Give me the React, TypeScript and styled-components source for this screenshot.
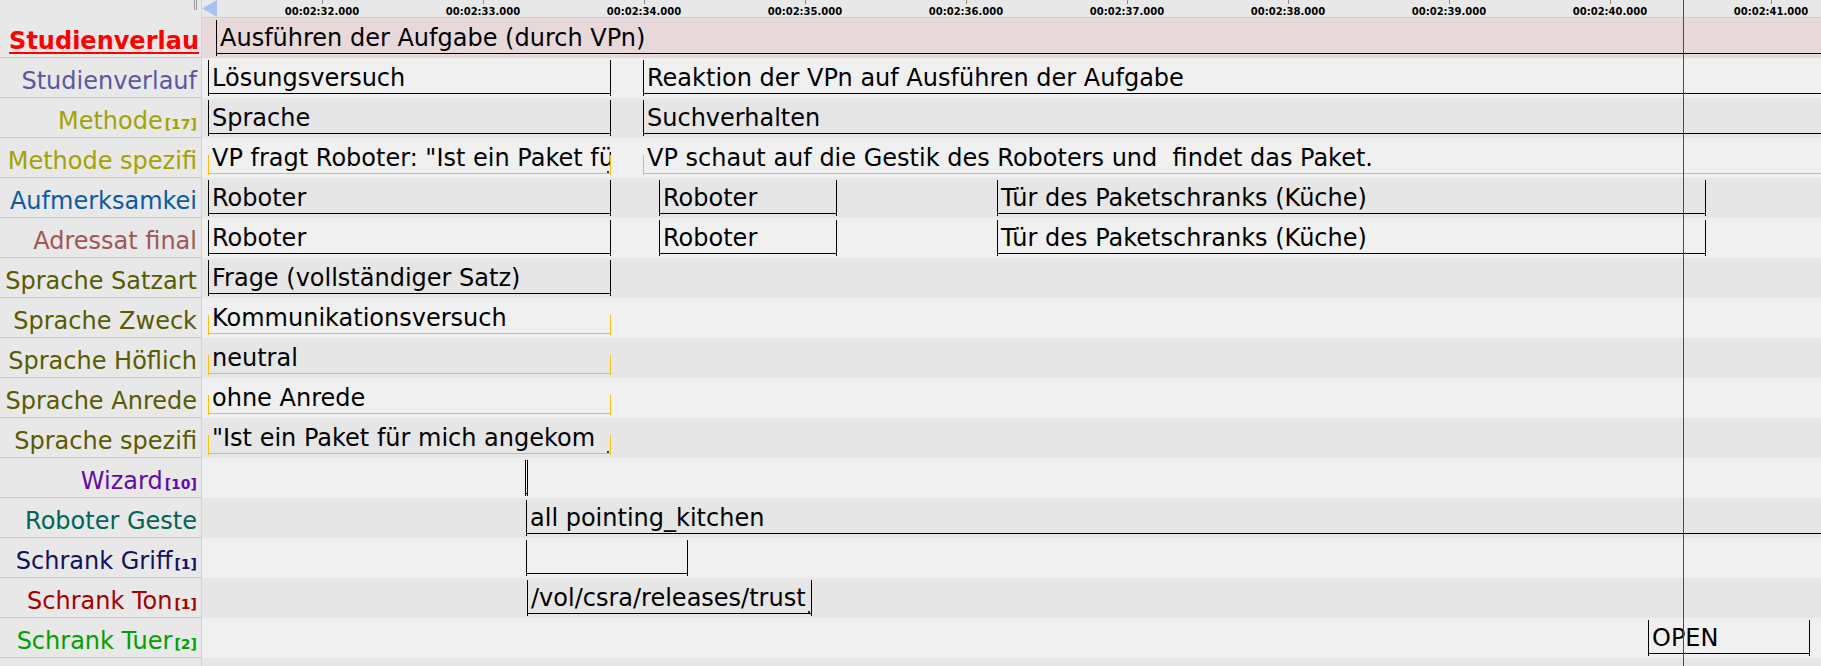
import React from "react";
import styled, { createGlobalStyle } from "styled-components";

type Kind = "solid" | "dep";
type Tone = "active" | "light" | "dark";

type Seg = {
  from: number;
  to?: number;
  text?: string;
  cut?: boolean;
};

type Tier = {
  name: string;
  count?: number;
  color: string;
  kind?: Kind;
  active?: boolean;
  segs: Seg[];
};

const LABEL_W = 202;
const SEC_PX = 161;
const FIRST_TICK = 120; // 00:02:32.000, in track coordinates
const CURSOR_X = 1683;

const ticks = [32, 33, 34, 35, 36, 37, 38, 39, 40, 41];

const roboterRow: Seg[] = [
  { from: 6, to: 409, text: "Roboter" },
  { from: 457, to: 635, text: "Roboter" },
  { from: 795, to: 1504, text: "Tür des Paketschranks (Küche)" },
];

const tiers: Tier[] = [
  {
    name: "Studienverlau",
    color: "#ff0000",
    active: true,
    segs: [{ from: 14, text: "Ausführen der Aufgabe (durch VPn)" }],
  },
  {
    name: "Studienverlauf",
    color: "#5858a2",
    segs: [
      { from: 6, to: 409, text: "Lösungsversuch" },
      { from: 441, text: "Reaktion der VPn auf Ausführen der Aufgabe" },
    ],
  },
  {
    name: "Methode",
    count: 17,
    color: "#a3a300",
    segs: [
      { from: 6, to: 409, text: "Sprache" },
      { from: 441, text: "Suchverhalten" },
    ],
  },
  {
    name: "Methode spezifi",
    color: "#a3a300",
    kind: "dep",
    segs: [
      { from: 6, to: 409, text: 'VP fragt Roboter: "Ist ein Paket fü', cut: true },
      { from: 441, text: "VP schaut auf die Gestik des Roboters und  findet das Paket." },
    ],
  },
  { name: "Aufmerksamkei", color: "#0a5aa5", segs: roboterRow },
  { name: "Adressat final", color: "#a35555", segs: roboterRow },
  {
    name: "Sprache Satzart",
    color: "#5a5a00",
    segs: [{ from: 6, to: 409, text: "Frage (vollständiger Satz)" }],
  },
  {
    name: "Sprache Zweck",
    color: "#5a5a00",
    kind: "dep",
    segs: [{ from: 6, to: 409, text: "Kommunikationsversuch" }],
  },
  {
    name: "Sprache Höflich",
    color: "#5a5a00",
    kind: "dep",
    segs: [{ from: 6, to: 409, text: "neutral" }],
  },
  {
    name: "Sprache Anrede",
    color: "#5a5a00",
    kind: "dep",
    segs: [{ from: 6, to: 409, text: "ohne Anrede" }],
  },
  {
    name: "Sprache spezifi",
    color: "#5a5a00",
    kind: "dep",
    segs: [{ from: 6, to: 409, text: '"Ist ein Paket für mich angekom', cut: true }],
  },
  {
    name: "Wizard",
    count: 10,
    color: "#640aa5",
    segs: [{ from: 323, to: 326 }],
  },
  {
    name: "Roboter Geste",
    color: "#00645a",
    segs: [{ from: 324, text: "all pointing_kitchen" }],
  },
  {
    name: "Schrank Griff",
    count: 1,
    color: "#12125f",
    segs: [{ from: 324, to: 486 }],
  },
  {
    name: "Schrank Ton",
    count: 1,
    color: "#a50000",
    segs: [{ from: 325, to: 610, text: "/vol/csra/releases/trust", cut: true }],
  },
  {
    name: "Schrank Tuer",
    count: 2,
    color: "#00a000",
    segs: [{ from: 1446, to: 1608, text: "OPEN" }],
  },
  { name: "", color: "#000", segs: [] },
];

export default function App() {
  return (
    <>
      <GlobalStyle />
      <Viewer>
        <Header>
          <Corner>
            <Grip />
          </Corner>
          <Ruler>
            <ScrollMark width="16" height="17" viewBox="0 0 16 17">
              <polygon points="15,0 15,17 0,8.5" fill="#a9c1f2" />
            </ScrollMark>
            {ticks.map((s, i) => (
              <React.Fragment key={s}>
                <TickMark $x={FIRST_TICK + i * SEC_PX} />
                <TickLabel $x={FIRST_TICK + i * SEC_PX}>
                  00:02:{s}.000
                </TickLabel>
              </React.Fragment>
            ))}
          </Ruler>
        </Header>

        {tiers.map((tier, i) => (
          <Row key={i}>
            <Label $color={tier.color} $active={!!tier.active}>
              {tier.name}
              {tier.count !== undefined && <Count>[{tier.count}]</Count>}
            </Label>
            <Track $tone={tier.active ? "active" : i % 2 === 1 ? "light" : "dark"}>
              {tier.segs.map((seg, j) => (
                <Segment
                  key={j}
                  $kind={tier.kind ?? "solid"}
                  $closed={seg.to !== undefined}
                  $left={seg.from}
                  $width={seg.to !== undefined ? seg.to - seg.from : 3000}
                >
                  {seg.text && <SegText>{seg.text}</SegText>}
                  {seg.cut && <CutDot />}
                </Segment>
              ))}
            </Track>
          </Row>
        ))}

        <Cursor />
      </Viewer>
    </>
  );
}

/* styles */

const GlobalStyle = createGlobalStyle`
  html, body {
    margin: 0;
    padding: 0;
    background: #e8e8e8;
    overflow: hidden;
  }
  body {
    font-family: "DejaVu Sans", "Noto Sans", sans-serif;
  }
`;

const Viewer = styled.div`
  position: relative;
  width: 100%;
  height: 100vh;
  overflow: hidden;
  background: #e8e8e8;
`;

const Header = styled.div`
  display: flex;
  height: 18px;
`;

const Corner = styled.div`
  display: flex;
  justify-content: flex-end;
  width: ${LABEL_W}px;
  flex: none;
  box-sizing: border-box;
  padding-right: 4px;
  border-right: 1px solid #cdd3f5;
`;

const Grip = styled.span`
  width: 3px;
  height: 10px;
  box-sizing: border-box;
  border-left: 1px solid #9a9a9a;
  border-right: 1px solid #9a9a9a;
`;

const Ruler = styled.div`
  position: relative;
  flex: 1;
  box-sizing: border-box;
  border-bottom: 1px solid #c4cbf5;
  overflow: hidden;
`;

const ScrollMark = styled.svg`
  position: absolute;
  left: 0;
  top: 0;
`;

const TickMark = styled.div<{ $x: number }>`
  position: absolute;
  top: 0;
  left: ${({ $x }) => $x}px;
  width: 1px;
  height: 4px;
  background: #8c8c8c;
`;

const TickLabel = styled.div<{ $x: number }>`
  position: absolute;
  top: 7px;
  left: ${({ $x }) => $x}px;
  transform: translateX(-50%);
  font-size: 10px;
  line-height: 10px;
  font-weight: bold;
  color: #000;
  white-space: nowrap;
`;

const Row = styled.div`
  display: flex;
  height: 40px;
`;

const Label = styled.div<{ $color: string; $active: boolean }>`
  width: ${LABEL_W}px;
  flex: none;
  height: 40px;
  box-sizing: border-box;
  padding: 3px ${({ $active }) => ($active ? "2px" : "4px")} 0 0;
  border-right: 1px solid #cdd3f5;
  border-bottom: 1px solid #c9c9c9;
  text-align: right;
  white-space: nowrap;
  overflow: hidden;
  font-size: 24px;
  line-height: 40px;
  color: ${({ $color }) => $color};
  font-weight: ${({ $active }) => ($active ? "bold" : "normal")};
  text-decoration: ${({ $active }) => ($active ? "underline" : "none")};
  text-decoration-thickness: 2px;
  text-underline-offset: 3px;
`;

const Count = styled.span`
  font-size: 14px;
  font-weight: bold;
  margin-left: 2px;
`;

const trackColors: Record<Tone, string> = {
  active: "#e7d9d9",
  light: "#f0f0f0",
  dark: "#e6e6e6",
};

const Track = styled.div<{ $tone: Tone }>`
  position: relative;
  flex: 1;
  overflow: hidden;
  background: ${({ $tone }) => trackColors[$tone]};
`;

const Segment = styled.div<{
  $kind: Kind;
  $closed: boolean;
  $left: number;
  $width: number;
}>`
  position: absolute;
  top: 2px;
  height: 36px;
  left: ${({ $left }) => $left}px;
  width: ${({ $width }) => $width}px;
  overflow: hidden;

  &::before {
    content: "";
    position: absolute;
    left: 0;
    right: 0;
    top: ${({ $kind }) => ($kind === "dep" ? "15px" : "0")};
    bottom: ${({ $kind }) => ($kind === "dep" ? "1px" : "0")};
    box-sizing: border-box;
    border-left: 1px solid ${({ $kind }) => ($kind === "dep" ? "#f6c108" : "#000")};
    border-right: ${({ $kind, $closed }) =>
      $closed ? `1px solid ${$kind === "dep" ? "#f6c108" : "#000"}` : "none"};
  }

  &::after {
    content: "";
    position: absolute;
    left: 0;
    right: 0;
    top: 33px;
    height: 1px;
    background: ${({ $kind }) => ($kind === "dep" ? "#f6c108" : "#000")};
  }
`;

const SegText = styled.div`
  padding-left: 4px;
  font-size: 24px;
  line-height: 37px;
  color: #000;
  white-space: pre;
`;

const CutDot = styled.span`
  position: absolute;
  right: 2px;
  top: 31px;
  width: 2px;
  height: 2px;
  background: #333;
`;

const Cursor = styled.div`
  position: absolute;
  top: 0;
  bottom: 0;
  left: ${CURSOR_X}px;
  width: 1px;
  background: #ff0000;
  pointer-events: none;
`;
